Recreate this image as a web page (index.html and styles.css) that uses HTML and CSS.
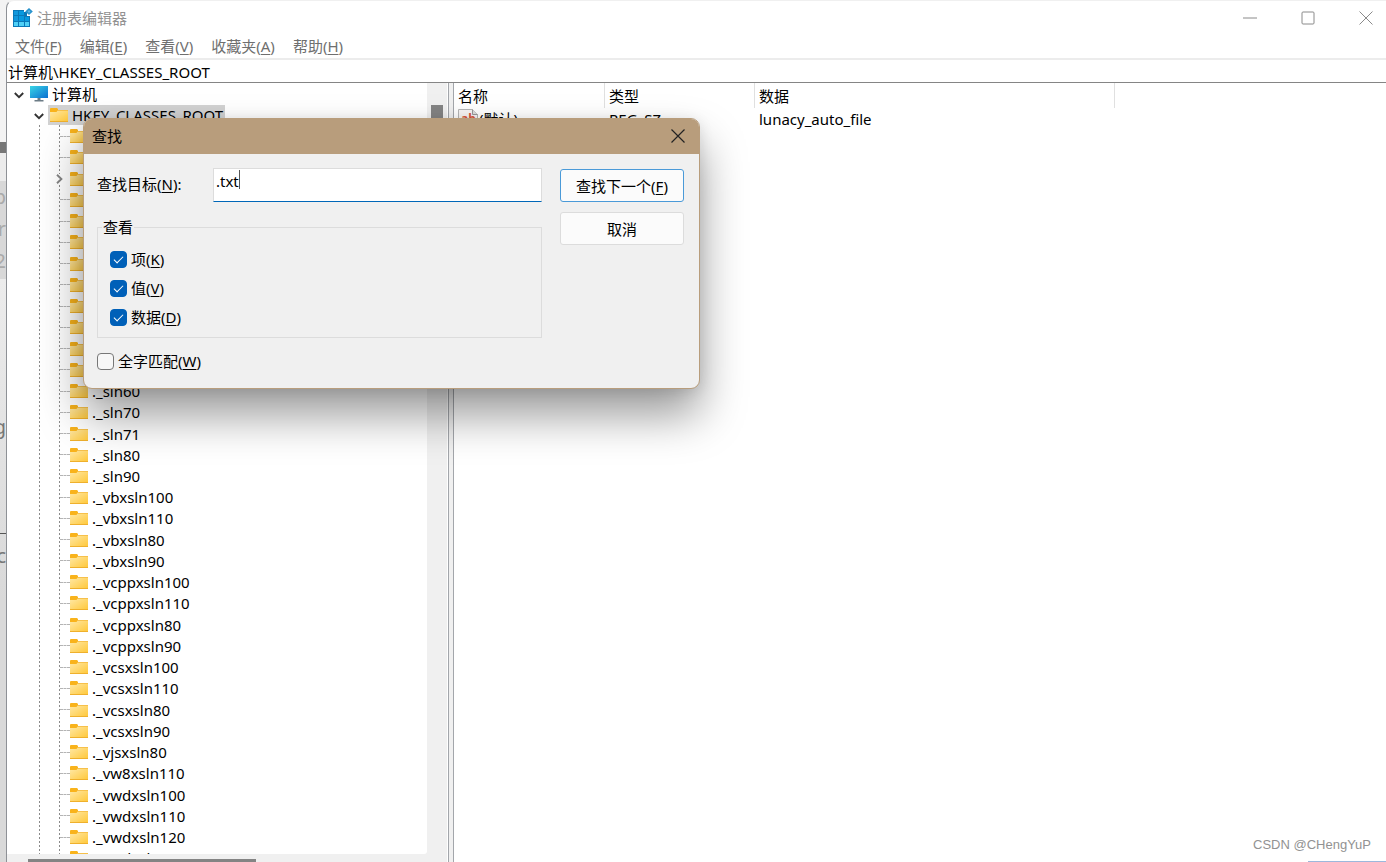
FILE: index.html
```
<!DOCTYPE html>
<html lang="zh-CN">
<head>
<meta charset="utf-8">
<title>注册表编辑器</title>
<link rel="stylesheet" href="styles.css">
</head>
<body>
<svg class="defs" aria-hidden="true">
  <defs>
    <linearGradient id="fold" x1="0" y1="0" x2="1" y2="1"><stop offset="0" stop-color="#ffe9a8"/><stop offset="1" stop-color="#ffc83a"/></linearGradient>
    <linearGradient id="screen" x1="0" y1="0" x2="1" y2="1"><stop offset="0" stop-color="#3ad6e6"/><stop offset="1" stop-color="#0b6fd0"/></linearGradient>
    <symbol id="folder" viewBox="0 0 18 16"><path d="M0 2q0-1 1-1h6l1 1v3H0z" fill="#f9b31b"/><path d="M0 5h6.500l1.500-2h10v11.500H0z" fill="url(#fold)"/><path d="M7.500 3H18v.8H7z" fill="#f3b73b"/><path d="M0 14h18v1H0z" fill="#efb02c"/></symbol>
    <symbol id="down" viewBox="0 0 10 7"><path d="M.8 1 5 5.200 9.200 1" fill="none" stroke="#333" stroke-width="1.900"/></symbol>
    <symbol id="right" viewBox="0 0 7 10"><path d="M1 .8 5.400 5 1 9.200" fill="none" stroke="#858585" stroke-width="1.900"/></symbol>
  </defs>
</svg>
<aside class="behind" aria-hidden="true">
  <div class="behind-mark"></div>
  <div class="behind-block"><span>p</span><span>r</span><span>2</span></div>
  <span class="behind-g">g</span>
  <div class="behind-rule"></div>
  <span class="behind-c">c</span>
</aside>
<div class="window">
  <header class="titlebar">
    <svg class="app-icon" viewBox="0 0 20 20"><path d="M0 2h11v6h6v11H0z" fill="#0a78b8"/><path d="M11 4h3v4h-3z" fill="#0a78b8"/><path d="M1 3h4v4H1zM1 8h4v5H1z" fill="#1398dc"/><path d="M6 3h5v4H6zM6 8h5v5H6zM12 9h4v4h-4z" fill="#0799df"/><path d="M1 14h4v4H1zM6 14h5v4H6zM12 14h4v4h-4z" fill="#4fd0f7"/><path d="M16 0l3.800 3.500L16 7l-3.800-3.500z" fill="#2792cc"/><path d="M16 2l1.500 1.400L16 5l-1.500-1.600z" fill="#61b6e2"/></svg>
    <h1 class="title">注册表编辑器</h1>
    <div class="win-buttons">
      <button aria-label="最小化"><svg viewBox="0 0 14 14"><path d="M0 7h14" /></svg></button>
      <button aria-label="最大化"><svg viewBox="0 0 14 14"><rect x="1" y="1" width="12" height="12" rx="1"/></svg></button>
      <button aria-label="关闭"><svg viewBox="0 0 14 14"><path d="M.5.5l13 13M13.500.5l-13 13"/></svg></button>
    </div>
  </header>
  <nav class="menubar">
    <button>文件(<u>F</u>)</button><button>编辑(<u>E</u>)</button><button>查看(<u>V</u>)</button><button>收藏夹(<u>A</u>)</button><button>帮助(<u>H</u>)</button>
  </nav>
  <input class="address" aria-label="地址" value="计算机\HKEY_CLASSES_ROOT">
  <main class="panes">
    <section class="tree-pane">
      <div class="tree-view">
        <ul class="tree" id="tree">
          <li class="root"><svg class="down"><use href="#down"/></svg><svg class="pc" viewBox="0 0 18 18"><path d="M0 1h18v12H0z" fill="url(#screen)"/><path d="M7.500 13h3v2h-3zM4.500 15h9v1.500h-9z" fill="#6c7c86"/></svg><span>计算机</span></li>
          <li class="hive"><svg class="down"><use href="#down"/></svg><span class="picked"><svg class="folder"><use href="#folder"/></svg><span>HKEY_CLASSES_ROOT</span></span></li>
        </ul>
      </div>
      <div class="vscroll"><div class="vthumb"></div></div>
      <div class="hscroll"><div class="hthumb"></div></div>
    </section>
    <div class="splitter"></div>
    <section class="list-pane">
      <table class="values">
        <colgroup><col class="c-name"><col class="c-type"><col class="c-data"><col></colgroup>
        <thead><tr><th>名称</th><th>类型</th><th>数据</th><th></th></tr></thead>
        <tbody><tr><td><span class="value"><svg class="ab" viewBox="0 0 20 20"><path d="M.5.500h14l5 5v14H.5z" fill="#f7f5f4" stroke="#b5b5b5"/><path d="M14.500.5v5h5" fill="#ddd" stroke="#999"/><text x="3" y="14">ab</text></svg>(默认)</span></td><td>REG_SZ</td><td>lunacy_auto_file</td><td></td></tr></tbody>
      </table>
      <footer class="mark">CSDN @CHengYuP</footer>
      <div class="edge"></div>
    </section>
  </main>
</div>
<form class="dialog" role="dialog" aria-labelledby="dlg-title" onsubmit="return false">
  <header class="dlg-head"><h2 id="dlg-title">查找</h2><button type="button" aria-label="关闭"><svg viewBox="0 0 14 14"><path d="M.5.5l13 13M13.500.5l-13 13"/></svg></button></header>
  <div class="dlg-body">
    <div class="fields">
      <div class="target"><label for="target">查找目标(<u>N</u>):</label><span class="entry"><input id="target" value=".txt"><i class="caret"></i></span></div>
      <fieldset>
        <legend>查看</legend>
        <label><input type="checkbox" checked><span>项(<u>K</u>)</span></label>
        <label><input type="checkbox" checked><span>值(<u>V</u>)</span></label>
        <label><input type="checkbox" checked><span>数据(<u>D</u>)</span></label>
      </fieldset>
      <label class="whole"><input type="checkbox"><span>全字匹配(<u>W</u>)</span></label>
    </div>
    <div class="actions"><button class="primary">查找下一个(<u>F</u>)</button><button type="button">取消</button></div>
  </div>
</form>
<script src="tree.js"></script>
</body>
</html>
```
FILE: styles.css
```
* { box-sizing: border-box; }
body {
  margin: 0; height: 100vh; display: flex; overflow: hidden; position: relative;
  background: #f3f3f3; color: #000;
  font: 15px/20px "Noto Sans", "Noto Sans CJK SC", sans-serif;
}
button, input { font: inherit; color: inherit; }
button { border: 0; background: none; padding: 0; }
h1, h2 { margin: 0; font-size: 15px; font-weight: 400; }
svg { flex: none; display: block; }
u { text-underline-offset: 2px; text-decoration-thickness: 1px; }
.defs { position: absolute; width: 0; height: 0; }

.behind { width: 6px; flex: none; overflow: hidden; background: linear-gradient(#f3f3f3 0 142px, #ececec 142px 280px, #d9d9d9 600px); color: #777; font-size: 20px; display: flex; flex-direction: column; align-items: flex-end; }
.behind-mark { width: 100%; height: 11px; margin-top: 142px; background: #777; }
.behind-block { width: 100%; height: 98px; margin-top: 28px; padding-top: 6px; background: #d8d8d8; color: #aaa; display: flex; flex-direction: column; align-items: flex-end; gap: 12px; }
.behind-g { margin-top: 138px; }
.behind-rule { width: 100%; height: 1px; margin-top: 96px; background: #555; flex: none; }
.behind-c { margin-top: 12px; }

.window { flex: 1; min-width: 0; display: flex; flex-direction: column; background: #fff; border-left: 1px solid #8e9196; border-top: 1px solid #f0f0f0; border-top-left-radius: 8px; overflow: hidden; }
.titlebar { height: 33px; flex: none; display: flex; align-items: center; padding-left: 6px; color: #929292; }
.app-icon { width: 20px; height: 20px; margin-right: 4px; }
.win-buttons { margin-left: auto; display: flex; gap: 18px; }
.win-buttons button { width: 40px; height: 32px; display: grid; place-items: center; }
.win-buttons svg { width: 14px; height: 14px; fill: none; stroke: #8a8a8a; }
.menubar { height: 26px; flex: none; display: flex; align-items: center; gap: 18px; padding-left: 8px; color: #6f6f6f; border-bottom: 2px solid #ececec; }
.address { height: 23px; flex: none; width: 100%; border: 0; border-bottom: 1px solid #858585; padding: 0 1px; background: #fff; outline: 0; }
.panes { flex: 1; min-height: 0; display: flex; }

.tree-pane { flex: none; width: 440px; background: #f0f0f0; display: grid; grid-template: minmax(0, 1fr) 8px / minmax(0, 1fr) 20px; }
.tree-view { background: #fff; overflow: hidden; border-bottom-right-radius: 3px; }
.tree { list-style: none; margin: 0; padding: 0; height: calc(100% + 15px); display: grid; grid-auto-rows: 1fr; background: repeating-linear-gradient(#8a8a8a 0 2px, transparent 2px 4px) 32px 42px / 1px 100% no-repeat, repeating-linear-gradient(#8a8a8a 0 2px, transparent 2px 4px) 52px 42px / 1px 100% no-repeat; }
.tree li { display: flex; align-items: center; min-height: 0; white-space: nowrap; }
.down { width: 10px; height: 7px; margin-top: 3px; }
.right { width: 7px; height: 10px; }
.folder { width: 18px; height: 16px; }
.root { padding-left: 7px; gap: 6px; }
.pc { width: 18px; height: 18px; }
.root span { margin-left: -2px; }
.hive { padding-left: 27px; gap: 5px; }
.picked { display: flex; align-items: center; gap: 4px; background: #d2d2d2; padding: 0 2px 0 2px; margin-left: -1px; }
.key { padding-left: 53px; gap: 4px; }
.branch { width: 10px; margin-right: -4px; border-top: 1px dashed #b4b4b4; }
.key.closed { padding-left: 49px; gap: 7px; }
.key.closed .right { background: #fff; }
.vscroll { padding: 22px 4px 0; }
.vthumb { height: 220px; background: #848484; }
.hscroll { grid-column: 1 / -1; padding: 5px 0 0 21px; }
.hthumb { width: 228px; height: 3px; background: #848484; }
.splitter { flex: none; width: 6px; margin-left: 1px; border-left: 1px solid #a3a6ab; border-right: 1px solid #a3a6ab; background: #f0f0f0; cursor: col-resize; }

.list-pane { flex: 1; min-width: 0; display: flex; flex-direction: column; }
.values { width: 100%; table-layout: fixed; border-collapse: separate; border-spacing: 0; }
.c-name { width: 151px; } .c-type { width: 150px; } .c-data { width: 360px; }
.values th { height: 25px; padding: 1px 4px 0; text-align: left; font-weight: 400; border-right: 1px solid #e0e0e0; }
.values th:last-child { border: 0; }
.values td { height: 21px; padding: 0 4px; }
.value { display: flex; align-items: center; gap: 1px; }
.ab { width: 20px; height: 20px; }
.ab text { font: 700 12px "Noto Sans", sans-serif; fill: #d9583b; }
.mark { margin-top: auto; padding: 0 15px 6px; text-align: right; color: #929292; font: 13px/20px "Liberation Sans", sans-serif; }
.edge { align-self: flex-end; width: 78px; height: 1px; background: #9db8dc; }

.dialog { position: absolute; left: 83px; top: 118px; width: 617px; background: #f0f0f0; border: 1px solid #b89d7c; border-radius: 9px; overflow: hidden; box-shadow: 0 26px 46px rgba(0,0,0,.4), 0 2px 14px rgba(0,0,0,.1); }
.dlg-head { height: 35px; padding: 0 14px 2px 8px; display: flex; align-items: center; justify-content: space-between; background: #b89d7c; }
.dlg-head svg { width: 14px; height: 14px; stroke: #222; fill: none; stroke-width: 1.200; }
.dlg-body { display: flex; gap: 18px; padding: 14px 15px 17px 13px; }
.fields { flex: 1; display: flex; flex-direction: column; }
.target { display: flex; align-items: center; }
.target label { width: 116px; padding-bottom: 3px; }
.entry { flex: 1; display: flex; position: relative; }
.entry input { width: 100%; height: 34px; padding: 0 2px 8px; background: #fff; border: 1px solid #dcdcdc; border-bottom-color: #0067b8; outline: 0; }
.caret { position: absolute; left: 26px; top: 2px; width: 1px; height: 19px; background: #555; }
fieldset { margin: 15px 0 0; padding: 12px 12px 10px; border: 1px solid #dcdcdc; min-width: 0; display: flex; flex-direction: column; gap: 9px; }
legend { padding: 0 1px; margin-left: -8px; }
fieldset label, .whole { display: flex; align-items: center; gap: 4px; }
.whole { margin-top: 13px; }
input[type=checkbox] { appearance: none; flex: none; width: 17px; height: 17px; margin: 0; border: 1px solid #777; border-radius: 4px; background: #f7f7f7; display: grid; place-items: center; }
input[type=checkbox]:checked { background: #0060b8; border-color: #0060b8; }
input[type=checkbox]:checked::before { content: ""; width: 8px; height: 4px; border: solid #fff; border-width: 0 0 1px 1px; transform: translateY(-1px) rotate(-45deg); }
.actions { width: 124px; display: flex; flex-direction: column; gap: 10px; padding-top: 1px; }
.actions button { height: 33px; background: #fbfbfb; border: 1px solid #dcdcdc; border-radius: 3px; }
.actions .primary { border-color: #4a9ad8; }
```
FILE: tree.js
```
const names = Array(12).fill("").concat(
  ["sln60", "sln70", "sln71", "sln80", "sln90", "vbxsln100", "vbxsln110", "vbxsln80", "vbxsln90",
   "vcppxsln100", "vcppxsln110", "vcppxsln80", "vcppxsln90", "vcsxsln100", "vcsxsln110", "vcsxsln80",
   "vcsxsln90", "vjsxsln80", "vw8xsln110", "vwdxsln100", "vwdxsln110", "vwdxsln120", "vwdxsln140"
  ].map(n => "._" + n));
document.getElementById("tree").insertAdjacentHTML("beforeend", names.map((name, i) => {
  const closed = i === 2;
  const lead = closed ? '<svg class="right"><use href="#right"/></svg>' : '<span class="branch"></span>';
  return `<li class="key${closed ? " closed" : ""}">${lead}<svg class="folder"><use href="#folder"/></svg><span>${name}</span></li>`;
}).join(""));
```
